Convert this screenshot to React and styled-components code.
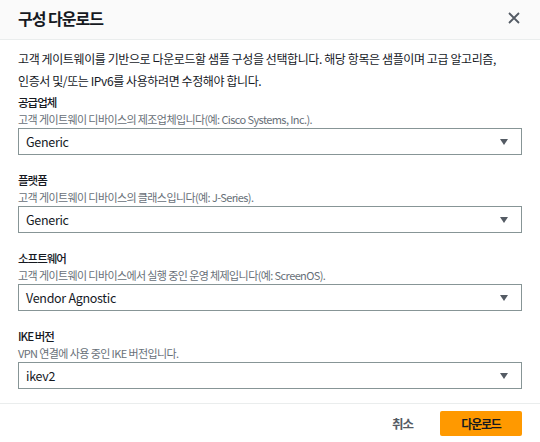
import styled, { createGlobalStyle } from 'styled-components'

const GlobalStyle = createGlobalStyle`
  html, body {
    margin: 0;
    padding: 0;
    background: #ffffff;
  }
  body {
    font-family: "Noto Sans CJK KR", "Noto Sans", sans-serif;
    color: #16191f;
  }
`

const Modal = styled.div`
  width: 540px;
  height: 442px;
  display: flex;
  flex-direction: column;
  background: #ffffff;
  overflow: hidden;
`

const Header = styled.header`
  height: 40px;
  box-sizing: border-box;
  display: flex;
  align-items: center;
  justify-content: space-between;
  padding: 0 20px 4px 18px;
  background: #fafafa;
  border-bottom: 1px solid #eaeded;
  flex-shrink: 0;
`

const Title = styled.h2`
  margin: 0;
  font-size: 16px;
  letter-spacing: -1px;
  font-weight: 700;
  color: #16191f;
`

const CloseButton = styled.button`
  border: none;
  background: transparent;
  padding: 0;
  width: 12px;
  height: 12px;
  display: flex;
  cursor: pointer;
`

const Body = styled.div`
  flex: 1;
  padding: 8px 18px 0;
  border-bottom: 1px solid #eaeded;
`

const Intro = styled.p`
  margin: 0;
  font-size: 12px;
  letter-spacing: -0.4px;
  line-height: 22px;
`

const Field = styled.div`
  display: flex;
  flex-direction: column;
  margin-bottom: ${(p) => (p.last ? '0' : '15px')};
`

const Label = styled.label`
  font-size: 11.5px;
  letter-spacing: -1px;
  font-weight: 500;
  line-height: 20px;
`

const Hint = styled.span`
  font-size: 11px;
  letter-spacing: -0.6px;
  line-height: 14px;
  color: #687078;
  margin-bottom: 2px;
`

const Select = styled.div`
  height: 27px;
  box-sizing: border-box;
  border: 1px solid #879596;
  display: flex;
  align-items: center;
  justify-content: space-between;
  padding: 0 13px 0 7px;
  font-size: 12.5px;
  letter-spacing: -0.3px;
  color: #16191f;
`

const Footer = styled.footer`
  height: 38px;
  display: flex;
  align-items: center;
  justify-content: flex-end;
  gap: 27px;
  padding: 0 18px;
`

const LinkButton = styled.button`
  border: none;
  background: transparent;
  font-family: inherit;
  font-size: 12.5px;
  letter-spacing: -1px;
  font-weight: 700;
  color: #545b64;
  padding: 0;
`

const PrimaryButton = styled.button`
  width: 82px;
  height: 25px;
  border: none;
  border-radius: 2px;
  background: #ff9900;
  font-family: inherit;
  font-size: 12px;
  letter-spacing: -1.2px;
  font-weight: 700;
  color: #16191f;
`

const Caret = () => (
  <svg width="8" height="6" viewBox="0 0 8 6">
    <path d="M0 0 H8 L4 6 Z" fill="#545b64" />
  </svg>
)

const fields = [
  { label: '공급업체', hint: '고객 게이트웨이 디바이스의 제조업체입니다(예: Cisco Systems, Inc.).', value: 'Generic' },
  { label: '플랫폼', hint: '고객 게이트웨이 디바이스의 클래스입니다(예: J-Series).', value: 'Generic' },
  { label: '소프트웨어', hint: '고객 게이트웨이 디바이스에서 실행 중인 운영 체제입니다(예: ScreenOS).', value: 'Vendor Agnostic' },
  { label: 'IKE 버전', hint: 'VPN 연결에 사용 중인 IKE 버전입니다.', value: 'ikev2' },
]

export default function App() {
  return (
    <>
      <GlobalStyle />
      <Modal>
        <Header>
          <Title>구성 다운로드</Title>
          <CloseButton aria-label="닫기">
            <svg width="12" height="12" viewBox="0 0 12 12">
              <path d="M1 1 L11 11 M11 1 L1 11" stroke="#545b64" strokeWidth="1.8" />
            </svg>
          </CloseButton>
        </Header>
        <Body>
          <Intro>
            고객 게이트웨이를 기반으로 다운로드할 샘플 구성을 선택합니다. 해당 항목은 샘플이며 고급 알고리즘,
            <br />
            인증서 및/또는 IPv6를 사용하려면 수정해야 합니다.
          </Intro>
          {fields.map((f, i) => (
            <Field key={f.label} last={i === fields.length - 1}>
              <Label>{f.label}</Label>
              <Hint>{f.hint}</Hint>
              <Select>
                <span>{f.value}</span>
                <Caret />
              </Select>
            </Field>
          ))}
        </Body>
        <Footer>
          <LinkButton>취소</LinkButton>
          <PrimaryButton>다운로드</PrimaryButton>
        </Footer>
      </Modal>
    </>
  )
}
